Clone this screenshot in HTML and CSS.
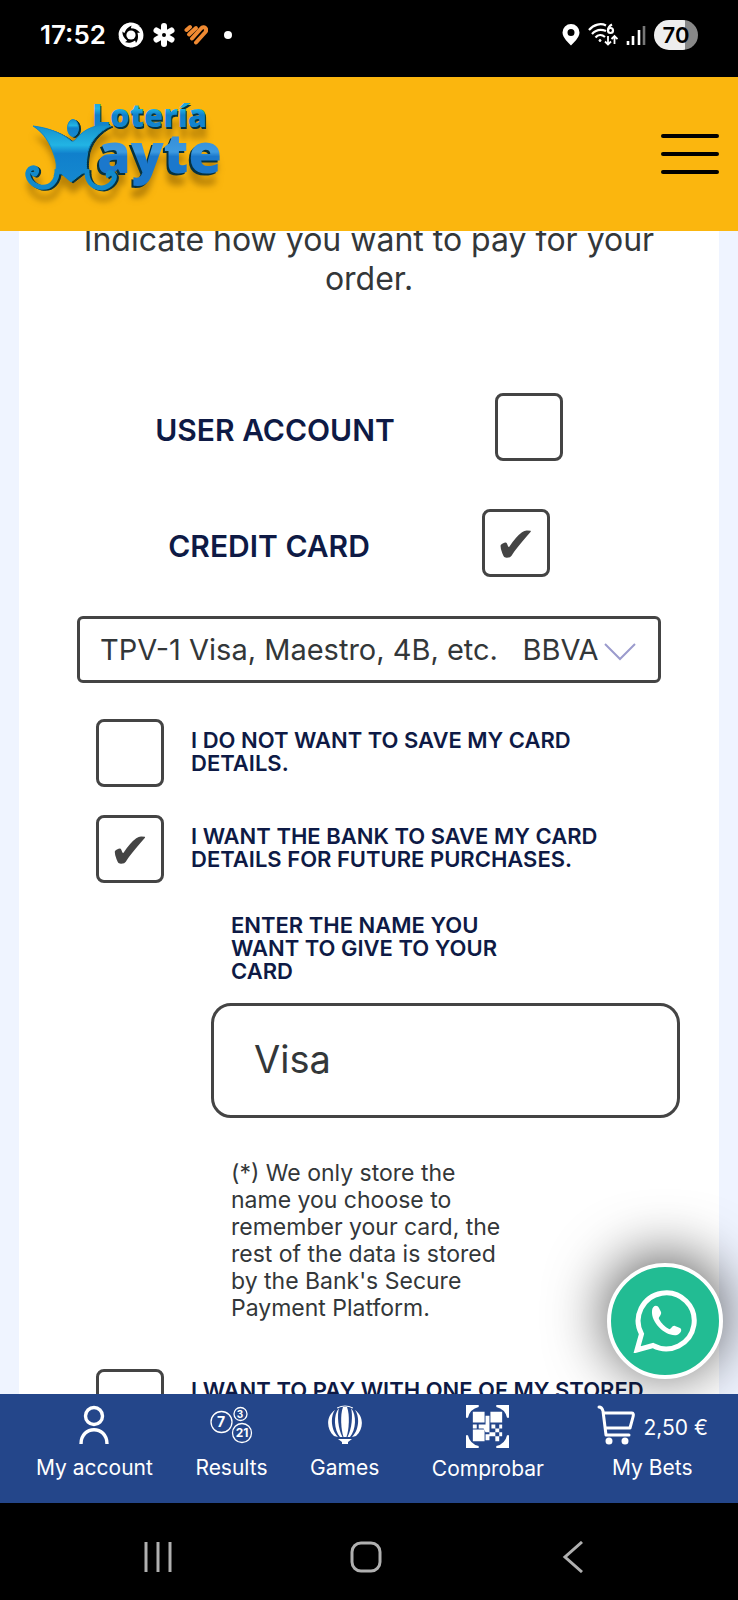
FILE: index.html
```html
<!DOCTYPE html>
<html lang="en">
<head>
  <meta charset="UTF-8" />
  <title>Lotería Mayte - Payment</title>
  <meta name="viewport" content="width=device-width, initial-scale=1" />
  <link rel="stylesheet" href="styles.css">
</head>
<body>
  <div class="status-bar">
    <div class="status-left">
      <span class="clock">17:52</span>
      <svg width="26" height="26" viewBox="0 0 26 26" fill="#fff">
        <circle cx="13" cy="13" r="4.600"/>
        <path id="blade" d="M3 7C7 -1 16 -1 22 4C15 2 9 4 6.500 11C4.500 10 3.500 9 3 7z"/>
        <use href="#blade" transform="rotate(72 13 13)"/>
        <use href="#blade" transform="rotate(144 13 13)"/>
        <use href="#blade" transform="rotate(216 13 13)"/>
        <use href="#blade" transform="rotate(288 13 13)"/>
      </svg>
      <svg width="24" height="26" viewBox="0 0 24 26">
        <g stroke="#fff" stroke-width="6" stroke-linecap="round">
          <path d="M12 4V8"/>
          <path d="M12 18V22"/>
          <path d="M4.500 8.500L8 10.500"/>
          <path d="M16 15.500L19.500 17.500"/>
          <path d="M4.500 17.500L8 15.500"/>
          <path d="M16 10.500L19.500 8.500"/>
        </g>
        <circle cx="12" cy="13" r="3.500" fill="#fff"/>
        <circle cx="12" cy="13" r="2" fill="#000"/>
      </svg>
      <svg width="24" height="24" viewBox="0 0 24 24" fill="none" stroke="#f08a32" stroke-width="4" stroke-linecap="round" stroke-linejoin="round">
        <path d="M2.500 7L6 4"/>
        <path d="M5 11.500L12 5"/>
        <path d="M8 15.500L17 5.500C20 2 24 6 21 9.500L12 19.500"/>
      </svg>
      <span class="dot"></span>
    </div>
    <div class="status-right">
      <svg width="18" height="22" viewBox="0 0 18 22">
        <path fill="#fff" fill-rule="evenodd" d="M9 0a8.500 8.500 0 0 1 8.500 8.500C17.500 14 11 19 9 21.500C7 19 .5 14 .5 8.500A8.500 8.500 0 0 1 9 0zM9 5a3.500 3.500 0 1 0 0 7a3.500 3.500 0 0 0 0-7z"/>
      </svg>
      <svg width="30" height="24" viewBox="0 0 30 24" fill="none" stroke="#fff" stroke-width="2.200">
        <path d="M1 7C6 1 13 0 18 2.500"/>
        <path d="M4 11C8 6.500 13 6 18 8"/>
        <path d="M7.500 14.500C10 11.500 14 11.500 17 14"/>
        <circle cx="12" cy="17.500" r="1" fill="#fff" stroke-width="1"/>
        <path d="M24 1.500C21 3 20 5 20 7.500"/>
        <circle cx="22.500" cy="7.500" r="2.500"/>
        <path d="M20 13V21M17 18.500L20 21.500L23 18.500M26.500 21V13M23.500 16L26.500 13L29.500 16" stroke-width="1.800"/>
      </svg>
      <svg width="20" height="22" viewBox="0 0 20 22" stroke="#fff" stroke-width="2.600">
        <path d="M2 17V21"/>
        <path d="M7 12V21"/>
        <path d="M13 6V21"/>
        <path d="M18 2V21" stroke="#777"/>
      </svg>
      <span class="battery">70</span>
    </div>
  </div>

  <header class="site-header">
    <a href="#" class="logo" aria-label="Lotería Mayte">
      <svg width="230" height="154" viewBox="0 0 230 154">
        <defs>
          <linearGradient id="blue" x1="0" y1="0" x2="0" y2="1">
            <stop offset="0" stop-color="#1590cc"/>
            <stop offset=".35" stop-color="#22b4e4"/>
            <stop offset=".5" stop-color="#1080cc"/>
            <stop offset="1" stop-color="#1588cf"/>
          </linearGradient>
          <linearGradient id="letters" x1="0" y1="0" x2="0" y2="1">
            <stop offset="0" stop-color="#2b7fd0"/>
            <stop offset=".5" stop-color="#3d9ae0"/>
            <stop offset=".56" stop-color="#1b78cc"/>
            <stop offset="1" stop-color="#1b78cc"/>
          </linearGradient>
          <g id="figure">
            <ellipse cx="73" cy="51" rx="5.500" ry="8.500"/>
            <path d="M33 49C50 51 63 57 70 63Q73 66 76 62C84 52 97 46 111 49C99 54 88 66 87 80C86 88 86 92 89 97Q84 94 80 98L71 105L63 98Q60 95 54 99C58 90 56 84 54 78C50 66 44 56 33 49z"/>
            <path d="M57 92C58 104 50 112 40 110C29 107 25 97 30 92C34 89 38 92 36 96C35 98 33 97 33 95" fill="none" stroke-width="5"/>
            <path d="M87 92C86 104 92 111 102 111C111 110 117 101 113 97C110 94 107 97 109 100" fill="none" stroke-width="5"/>
          </g>
        </defs>
        <g class="logo-shadow">
          <text x="93" y="52" class="logo-top">Lotería</text>
          <text x="95" y="98" class="logo-bottom">ayte</text>
          <use href="#figure" fill="#06323f" stroke="#06323f" x="2" y="1"/>
        </g>
        <text x="92" y="50" class="logo-top" fill="url(#blue)">Lotería</text>
        <text x="97" y="96" class="logo-bottom" fill="url(#letters)">ayte</text>
        <use href="#figure" fill="url(#blue)" stroke="#128acb"/>
      </svg>
    </a>
    <button type="button" class="menu-button" aria-label="Menu">
      <span></span>
      <span></span>
      <span></span>
    </button>
  </header>

  <main class="page">
    <form class="payment">
      <p class="intro">Indicate how you want to pay for your order.</p>

      <div class="method method-account">
        <label for="userAccount">USER ACCOUNT</label>
        <input type="checkbox" id="userAccount">
      </div>
      <div class="method method-card">
        <label for="creditCard">CREDIT CARD</label>
        <input type="checkbox" id="creditCard" checked>
      </div>

      <div class="select-wrap">
        <select aria-label="Payment gateway">
          <option>TPV-1 Visa, Maestro, 4B, etc. &nbsp; BBVA</option>
        </select>
        <svg class="chevron" width="32" height="18" viewBox="0 0 32 18">
          <path d="M1 1L16 16L31 1" fill="none" stroke="#9b9bcd" stroke-width="2"/>
        </svg>
      </div>

      <div class="option">
        <input type="checkbox" id="noSave">
        <label for="noSave">I DO NOT WANT TO SAVE MY CARD DETAILS.</label>
      </div>
      <div class="option">
        <input type="checkbox" id="bankSave" checked>
        <label for="bankSave">I WANT THE BANK TO SAVE MY CARD DETAILS FOR FUTURE PURCHASES.</label>
      </div>

      <div class="card-name">
        <label for="cardName">ENTER THE NAME YOU WANT TO GIVE TO YOUR CARD</label>
        <input type="text" id="cardName" value="Visa">
        <p class="note">(*) We only store the name you choose to remember your card, the rest of the data is stored by the Bank's Secure Payment Platform.</p>
      </div>

      <div class="option">
        <input type="checkbox" id="storedCard">
        <label for="storedCard">I WANT TO PAY WITH ONE OF MY STORED</label>
      </div>
    </form>

    <a href="#" class="whatsapp" aria-label="WhatsApp">
      <svg width="64" height="64" viewBox="0 0 64 64">
        <path d="M4 61L8.500 45A28 28 0 1 1 20 56.500z" fill="none" stroke="#fff" stroke-width="5"/>
        <path d="M19 22C19 17 24 15 26 19L28 23C29 26 25 28 26 30C28 34 32 38 36 40C38 41 39 36 42 37L47 39C50 41 47 45 44 46C33 48 18 34 19 22z" fill="#fff"/>
      </svg>
    </a>
  </main>

  <nav class="bottom-nav">
    <a href="#">
      <svg width="32" height="40" viewBox="0 0 32 40" fill="none" stroke="#fff" stroke-width="3.400">
        <circle cx="16" cy="11" r="8.500"/>
        <path d="M3 39C3 20 29 20 29 39"/>
      </svg>
      <span>My account</span>
    </a>
    <a href="#">
      <svg width="44" height="40" viewBox="0 0 44 40" fill="none" stroke="#fff" stroke-width="1.300">
        <circle cx="12.500" cy="17" r="10.500"/>
        <circle cx="31.500" cy="9" r="6.500"/>
        <circle cx="33" cy="28" r="9.500"/>
        <g class="ball-numbers">
          <text x="12" y="22" font-size="14">7</text>
          <text x="31" y="13" font-size="10">3</text>
          <text x="33" y="32" font-size="12">21</text>
        </g>
      </svg>
      <span>Results</span>
    </a>
    <a href="#">
      <svg width="36" height="40" viewBox="0 0 36 40" fill="#fff">
        <path d="M8 5C-1 11-1 24 7 31L11 32C4 25 3 12 8 5z"/>
        <path d="M12 3C6 10 7 25 13 32H15.500C11 24 10 10 12 3z"/>
        <path d="M16 2C13 10 14 25 16.500 32H19.500C22 25 23 10 20 2z"/>
        <path d="M24 3C30 10 29 25 23 32H20.500C25 24 26 10 24 3z"/>
        <path d="M28 5C37 11 37 24 29 31L25 32C32 25 33 12 28 5z"/>
        <path d="M10 3Q18-1 26 3" fill="none" stroke="#fff"/>
        <path d="M11 34H25L21 37V39H15V37z"/>
      </svg>
      <span>Games</span>
    </a>
    <a href="#" class="nav-check">
      <svg width="43" height="43" viewBox="0 0 44 44" fill="#fff">
        <path d="M0 0H13V2Q4 4 2 13H0zM44 0H31V2Q40 4 42 13H44zM0 44H13V42Q4 40 2 31H0zM44 44H31V42Q40 40 42 31H44z"/>
        <path d="M7 7H19V18H7zM25 7H37V18H25zM7 25H19V37H7z"/>
        <path d="M20 11H24V24H20zM7 20H11V24H7zM13 20H20V24H13zM18 24H24V28H20zM26 20H30V24H26zM34 20H37V24H34zM30 24H34V28H30zM20 30H24V36H20zM24 28H30V32H24zM34 28H37V32H34zM30 32H34V37H30z"/>
      </svg>
      <span>Comprobar</span>
    </a>
    <a href="#">
      <span class="cart">
        <svg width="38" height="40" viewBox="0 0 38 40" fill="none" stroke="#fff" stroke-width="3" stroke-linecap="round" stroke-linejoin="round">
          <path d="M2 2Q5 2 6 6L9 30H32M7 8H35Q37 8 36 12L33 23H9"/>
          <circle cx="12" cy="36" r="2" fill="#fff"/>
          <circle cx="28" cy="36" r="2" fill="#fff"/>
        </svg>
        <span class="amount">2,50 €</span>
      </span>
      <span>My Bets</span>
    </a>
  </nav>

  <div class="system-nav">
    <button type="button" aria-label="Recent apps">
      <svg width="30" height="32" viewBox="0 0 30 32" stroke="#b0b0b0" stroke-width="3">
        <path d="M3 1V31M15 1V31M27 1V31"/>
      </svg>
    </button>
    <button type="button" aria-label="Home">
      <svg width="32" height="32" viewBox="0 0 32 32" fill="none" stroke="#b0b0b0" stroke-width="3">
        <rect x="2" y="2" width="28" height="28" rx="9"/>
      </svg>
    </button>
    <button type="button" aria-label="Back">
      <svg width="30" height="32" viewBox="0 0 30 32" fill="none" stroke="#b0b0b0" stroke-width="3">
        <path d="M24 1L7 16L24 31"/>
      </svg>
    </button>
  </div>
</body>
</html>
```
FILE: styles.css
```css
* {
  box-sizing: border-box;
}
body {
  margin: 0;
  height: 100vh;
  display: flex;
  flex-direction: column;
  font-family: Inter, Roboto, sans-serif;
  color: #333739;
  background: #eff4ff;
}
svg {
  display: block;
}
button {
  border: none;
  background: none;
  padding: 0;
  cursor: pointer;
}
a {
  color: inherit;
  text-decoration: none;
}

/* phone status bar */
.status-bar {
  height: 77px;
  flex-shrink: 0;
  padding: 0 40px 8px;
  display: flex;
  align-items: center;
  justify-content: space-between;
  background: #000;
  color: #fff;
}
.status-left {
  display: flex;
  align-items: center;
  gap: 8px;
}
.clock {
  margin-right: 4px;
  font-size: 26px;
  font-weight: 600;
}
.dot {
  width: 8px;
  height: 8px;
  margin-left: 8px;
  border-radius: 50%;
  background: #fff;
}
.status-right {
  display: flex;
  align-items: center;
  gap: 8px;
}
.battery {
  width: 44px;
  height: 30px;
  border-radius: 15px;
  background: linear-gradient(90deg, #eee 70%, #888 70%);
  color: #000;
  font-size: 22px;
  font-weight: 600;
  line-height: 30px;
  text-align: center;
}

/* header */
.site-header {
  height: 154px;
  flex-shrink: 0;
  padding-right: 19px;
  display: flex;
  align-items: center;
  justify-content: space-between;
  background: #fbb60e;
}
.logo-top {
  font: 800 31px "Open Sans", sans-serif;
}
.logo-bottom {
  font: 800 54px "Open Sans", sans-serif;
}
.logo-shadow {
  fill: #06323f;
  filter: drop-shadow(0 10px 3px rgba(120, 80, 0, 0.5));
}
.menu-button {
  width: 58px;
  display: grid;
  gap: 14px;
}
.menu-button span {
  height: 4px;
  border-radius: 2px;
  background: #000;
}

/* payment form */
.page {
  position: relative;
  flex: 1;
  min-height: 0;
  padding: 0 19px;
  overflow: hidden;
}
.payment {
  min-height: 100%;
  padding: 0 58px;
  background: #fff;
}
.intro {
  margin: -11px 0 95px;
  font-size: 32px;
  line-height: 39px;
  text-align: center;
}
.method {
  display: flex;
  align-items: center;
  justify-content: center;
  gap: 100px;
  margin-bottom: 48px;
  padding-right: 20px;
  color: #0e1a45;
  font-size: 30px;
  font-weight: 600;
}
.method label {
  padding-top: 6px;
}
.method-card {
  gap: 112px;
  margin-bottom: 39px;
}
input[type="checkbox"] {
  appearance: none;
  width: 68px;
  height: 68px;
  margin: 0;
  flex-shrink: 0;
  display: grid;
  place-items: center;
  border: 3px solid #444;
  border-radius: 8px;
  background: #fff;
}
input[type="checkbox"]:checked::before {
  content: "✔";
  padding-top: 4px;
  color: #444;
  font: 50px/50px "DejaVu Sans", sans-serif;
}
.select-wrap {
  position: relative;
  margin-bottom: 36px;
}
select {
  appearance: none;
  width: 100%;
  height: 67px;
  padding: 0 56px 0 20px;
  border: 3px solid #444;
  border-radius: 6px;
  background: #fff;
  color: inherit;
  font: inherit;
  font-size: 29px;
}
.chevron {
  position: absolute;
  right: 25px;
  top: 27px;
}
.option {
  display: flex;
  gap: 27px;
  margin: 0 0 28px 19px;
}
.option label,
.card-name label {
  color: #0e1a45;
  font-size: 22px;
  font-weight: 600;
  line-height: 23px;
}
.option label {
  padding-top: 10px;
}
.card-name {
  margin: 31px -19px 47px 134px;
}
.card-name label,
.note {
  display: block;
  width: 270px;
  margin-left: 20px;
}
.card-name input {
  display: block;
  width: 100%;
  height: 115px;
  margin: 20px 0 42px;
  padding: 0 40px 4px;
  border: 3px solid #444;
  border-radius: 20px;
  color: inherit;
  font: inherit;
  font-size: 38px;
}
.note {
  margin-top: 0;
  margin-bottom: 0;
  font-size: 23px;
  line-height: 27px;
}
.whatsapp {
  position: absolute;
  right: 15px;
  bottom: 15px;
  width: 116px;
  height: 116px;
  display: grid;
  place-items: center;
  border: 4px solid #fff;
  border-radius: 50%;
  background: #22bc93;
  box-shadow: 0 -6px 60px rgba(0, 0, 0, 0.7);
}

/* bottom menu */
.bottom-nav {
  height: 109px;
  flex-shrink: 0;
  padding: 11px 30px 0 36px;
  display: flex;
  justify-content: space-between;
  background: #24468a;
  color: #fff;
  font-size: 21px;
}
.bottom-nav a {
  display: flex;
  flex-direction: column;
  align-items: center;
  gap: 10px;
  line-height: 26px;
}
.bottom-nav .nav-check {
  gap: 8px;
  margin: 0 10px;
}
.cart {
  display: flex;
  align-items: center;
  gap: 9px;
}
.amount {
  padding-top: 6px;
}
.ball-numbers {
  fill: #fff;
  stroke: none;
  font-weight: 700;
  text-anchor: middle;
}

/* android buttons */
.system-nav {
  height: 97px;
  flex-shrink: 0;
  padding: 10px 150px 0 143px;
  display: flex;
  align-items: center;
  justify-content: space-between;
  background: #000;
}
```
